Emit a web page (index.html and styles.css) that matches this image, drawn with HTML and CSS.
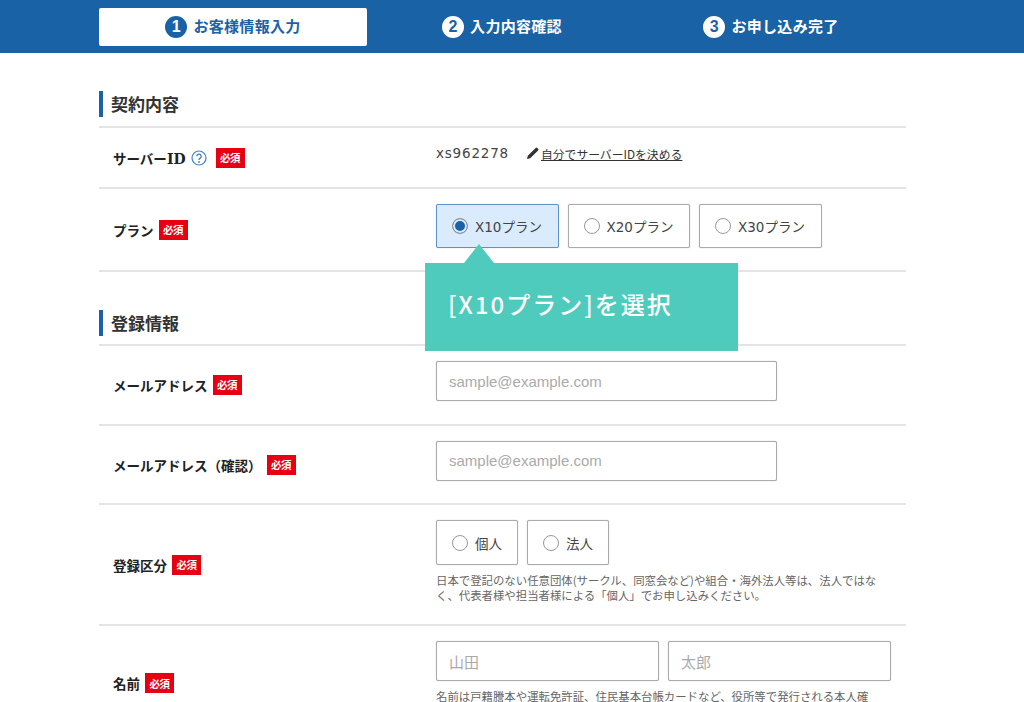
FILE: index.html
```html
<html>
  <head>
    <title>お申し込み</title>
    <link rel="stylesheet" href="styles.css">
  </head>
  <body>
	<header class="steps-bar">
		<div class="steps">
			<div class="step active"><span class="step-num">1</span><span class="step-text">お客様情報入力</span></div>
			<div class="step"><span class="step-num">2</span><span class="step-text">入力内容確認</span></div>
			<div class="step"><span class="step-num">3</span><span class="step-text">お申し込み完了</span></div>
		</div>
	</header>
	<main class="form">
		<h2 class="section-title"><span>契約内容</span></h2>
		<div class="row row-id">
			<div class="label"><span>サーバー<span class="latin">ID</span></span>
				<svg class="help" viewBox="0 0 16 16" width="16" height="16">
					<circle cx="8" cy="8" r="7" fill="none" stroke="#3f82c0" stroke-width="1.2"/>
					<path d="M5.8 6.2a2.2 2.2 0 1 1 3.4 1.9c-.8.5-1.2.9-1.2 1.9" fill="none" stroke="#3f82c0" stroke-width="1.3"/>
					<circle cx="8" cy="12" r=".9" fill="#3f82c0"/>
				</svg>
				<span class="required">必須</span>
			</div>
			<div class="value id-value">
				<span class="server-id">xs962278</span>
				<a class="id-link" href="#">
					<svg viewBox="0 0 12 12" width="12" height="12"><path d="M0 12l.8-3.2L8.6 1a1.2 1.2 0 0 1 1.7 0l.8.8a1.2 1.2 0 0 1 0 1.7L3.200 11.200z" fill="#333"/></svg>
					<span>自分でサーバーIDを決める</span>
				</a>
			</div>
		</div>
		<div class="row">
			<div class="label">プラン <span class="required">必須</span></div>
			<div class="value">
				<div class="choices">
					<label class="choice plan selected"><input type="radio" name="plan" checked>X10プラン</label>
					<label class="choice plan"><input type="radio" name="plan">X20プラン</label>
					<label class="choice plan"><input type="radio" name="plan">X30プラン</label>
				</div>
			</div>
		</div>

		<h2 class="section-title second"><span>登録情報</span></h2>
		<div class="row row-mail">
			<div class="label">メールアドレス <span class="required">必須</span></div>
			<div class="value"><input class="text-input wide" type="text" placeholder="sample@example.com"></div>
		</div>
		<div class="row row-mail">
			<div class="label">メールアドレス（確認） <span class="required">必須</span></div>
			<div class="value"><input class="text-input wide" type="text" placeholder="sample@example.com"></div>
		</div>
		<div class="row">
			<div class="label">登録区分 <span class="required">必須</span></div>
			<div class="value">
				<div class="choices">
					<label class="choice kind"><input type="radio" name="kind">個人</label>
					<label class="choice kind"><input type="radio" name="kind">法人</label>
				</div>
				<p class="note">日本で登記のない任意団体(サークル、同窓会など)や組合・海外法人等は、法人ではなく、代表者様や担当者様による「個人」でお申し込みください。</p>
			</div>
		</div>
		<div class="row">
			<div class="label">名前 <span class="required">必須</span></div>
			<div class="value">
				<div class="name-inputs">
					<input class="text-input" type="text" placeholder="山田">
					<input class="text-input" type="text" placeholder="太郎">
				</div>
				<p class="note">名前は戸籍謄本や運転免許証、住民基本台帳カードなど、役所等で発行される本人確<br>認書類に記載の名前をご入力ください。</p>
			</div>
		</div>
	</main>
	<div class="callout">[X10プラン]を選択</div>
  </body>
</html>
```

FILE: styles.css
```css
html, body {
	margin: 0;
	height: 702px;
	overflow: hidden;
}

body {
	position: relative;
	background-color: #fff;
	color: #222;
	font-family: "Noto Sans CJK JP", sans-serif;
}

.steps-bar {
	background-color: #1a62a6;
	height: 53px;
	padding-top: 8px;
	box-sizing: border-box;
}

.steps {
	display: flex;
	gap: 1px;
	margin-left: 99px;
}

.step {
	display: flex;
	align-items: center;
	justify-content: center;
	gap: 6px;
	width: 268px;
	height: 38px;
	color: #fff;
	font-size: 15px;
	font-weight: 700;
	letter-spacing: 0.3px;
	border-radius: 2px;
}

.step-text {
	margin-bottom: 3px;
}

.step-num {
	display: flex;
	align-items: center;
	justify-content: center;
	width: 22px;
	height: 22px;
	border-radius: 50%;
	background-color: #fff;
	color: #1a62a6;
	font-family: "Liberation Sans", sans-serif;
	font-size: 16px;
}

.step.active {
	background-color: #fff;
	color: #1a62a6;
}

.step.active .step-num {
	background-color: #1a62a6;
	color: #fff;
}

.form {
	width: 807px;
	margin: 38px 0 0 99px;
}

.section-title {
	margin: 0;
	padding-bottom: 9px;
	border-bottom: 2px solid #e4e4e4;
	font-size: 17px;
	font-weight: 700;
	line-height: 25px;
	color: #333;
}

.section-title span {
	display: block;
	border-left: 4px solid #1a62a6;
	padding: 0 0 1px 8px;
}

.section-title.second {
	margin-top: 38px;
	padding-bottom: 8px;
}

.row {
	display: flex;
	border-bottom: 2px solid #e4e4e4;
}

.label {
	display: flex;
	align-items: center;
	gap: 5px;
	width: 323px;
	padding-left: 14px;
	font-size: 13.500px;
	font-weight: 700;
	white-space: nowrap;
}

.latin {
	font-family: "DejaVu Serif", serif;
	font-size: 14px;
}

.help {
	margin-right: 4px;
}

.required {
	display: flex;
	align-items: center;
	justify-content: center;
	width: 29px;
	height: 20px;
	background-color: #e60012;
	color: #fff;
	font-size: 10.500px;
	font-weight: 700;
	letter-spacing: -0.5px;
}

.value {
	width: 470px;
	padding: 15px 0 22px;
}

.row-mail .value {
	padding-bottom: 22.700px;
}

.id-value {
	display: flex;
	align-items: center;
	height: 22px;
}

.server-id {
	width: 91px;
	margin-top: -2px;
	color: #444;
	font-family: "DejaVu Sans", sans-serif;
	font-size: 13.500px;
	letter-spacing: 0.8px;
}

.id-link {
	display: flex;
	align-items: center;
	gap: 2px;
	margin-top: -2px;
	color: #333;
	font-size: 11.800px;
}

.id-link span {
	text-decoration: underline;
}

.choices {
	display: flex;
	gap: 9px;
}

.choice {
	display: flex;
	align-items: center;
	gap: 7px;
	height: 44px;
	box-sizing: border-box;
	padding-left: 15px;
	border: 1px solid #aaa;
	border-radius: 2px;
	box-shadow: 0 0 1px #aaa;
	background-color: #fff;
	color: #444;
	font-family: "DejaVu Sans", "Noto Sans CJK JP", sans-serif;
	font-size: 13.500px;
}

.choice.plan {
	width: 122.500px;
}

.choice.kind {
	width: 82px;
	height: 45px;
}

.choice.selected {
	background-color: #d9ebfd;
	border-color: #5f93c7;
}

.choice input {
	appearance: none;
	width: 16px;
	height: 16px;
	margin: 0;
	border: 1.500px solid #999;
	border-radius: 50%;
	background-color: #fff;
}

.choice input:checked {
	background-color: #1a62a6;
	box-shadow: inset 0 0 0 2px #d9ebfd;
}

.text-input {
	display: block;
	width: 223px;
	height: 40px;
	box-sizing: border-box;
	padding: 0 12px;
	border: 1px solid #aaa;
	border-radius: 2px;
	box-shadow: 0 0 1px #aaa;
	font-family: "Noto Sans CJK JP", sans-serif;
	font-size: 15px;
}

.text-input.wide {
	width: 341px;
	font-family: "Liberation Sans", sans-serif;
}

.text-input::placeholder {
	color: #aaa;
	opacity: 1;
}

.name-inputs {
	display: flex;
	gap: 9px;
}

.note {
	width: 455px;
	margin: 8px 0 -1px;
	color: #666;
	font-size: 11.400px;
	line-height: 15px;
}

/* Annotation over the form */
.callout {
	position: absolute;
	left: 425px;
	top: 263px;
	display: flex;
	align-items: center;
	width: 313px;
	height: 88px;
	padding: 0 0 8px 23px;
	box-sizing: border-box;
	background-color: #4ecbbd;
	color: #fff;
	font-size: 24px;
	font-weight: 500;
	letter-spacing: 2px;
}

.callout::before {
	content: "";
	position: absolute;
	left: 39px;
	top: -19px;
	border-left: 15.500px solid transparent;
	border-right: 15.500px solid transparent;
	border-bottom: 19px solid #4ecbbd;
}
```
